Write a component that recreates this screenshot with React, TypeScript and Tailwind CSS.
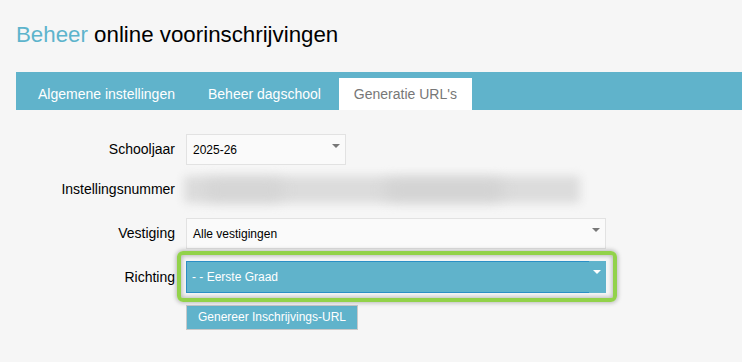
const font = { fontFamily: "'Liberation Sans', Arial, sans-serif" };

function Arrow({ light }: { light?: boolean }) {
  return (
    <span
      className={`absolute right-[5px] top-[9px] h-0 w-0 border-x-[4px] border-t-[4px] border-x-transparent ${
        light ? "border-t-white" : "border-t-[#777]"
      }`}
    />
  );
}

function Row({ label, children }: { label: string; children: React.ReactNode }) {
  return (
    <div className="flex items-center">
      <div className="w-[175px] shrink-0 text-right text-[14px] text-black">{label}</div>
      <div className="ml-[11px]">{children}</div>
    </div>
  );
}

export default function App() {
  return (
    <div className="min-h-screen w-[742px] bg-[#f6f6f6] text-black" style={font}>
      <h1 className="pl-[16px] pt-[22px] text-[22.3px] leading-[26px]">
        <span className="text-[#5db4cc]">Beheer</span> online voorinschrijvingen
      </h1>

      <nav className="ml-[16px] mt-[24px] flex h-[38px] items-end bg-[#60b3cb] pl-[22px] text-[14px]">
        <div className="flex h-[32px] items-center pr-[33px] text-white">Algemene instellingen</div>
        <div className="flex h-[32px] items-center pr-[18px] text-white">Beheer dagschool</div>
        <div className="flex h-[32px] w-[133px] items-center justify-center bg-white text-[#777]">
          Generatie URL's
        </div>
      </nav>

      <div className="mt-[24px] flex flex-col">
        <Row label="Schooljaar">
          <div className="relative flex h-[31px] w-[160px] items-center border border-[#e2e2e2] bg-[#fafafa] pl-[6px] text-[12px]">
            2025-26
            <Arrow />
          </div>
        </Row>

        <div className="mt-[11px]">
          <Row label="Instellingsnummer">
            <div className="relative -ml-[2px] h-[27px] w-[396px]">
              <div className="absolute inset-0 rounded-[2px] bg-[#dcdcdc] blur-[5px]" />
              <div className="absolute left-[20px] top-[5px] h-[18px] w-[80px] rounded-full bg-[#d4d4d4] blur-[7px]" />
              <div className="absolute left-[200px] top-[5px] h-[18px] w-[120px] rounded-full bg-[#d2d2d2] blur-[7px]" />
            </div>
          </Row>
        </div>

        <div className="mt-[15px]">
          <Row label="Vestiging">
            <div className="relative flex h-[31px] w-[420px] items-center border border-[#e2e2e2] bg-[#fafafa] pl-[6px] text-[12px]">
              Alle vestigingen
              <Arrow />
            </div>
          </Row>
        </div>

        <div className="mt-[12px]">
          <Row label="Richting">
            <div className="relative">
              <div className="pointer-events-none absolute -left-[9px] -top-[10px] h-[51px] w-[440px] rounded-[6px] border-[4px] border-[#92d24a] shadow-[0_0_4px_1px_rgba(0,0,0,0.25),inset_0_0_4px_1px_rgba(0,0,0,0.25)]" />
              <div className="relative flex h-[32px] w-[420px] items-center bg-[#60b3cb] pl-[6px] text-[12px] text-white">
                <div className="absolute inset-y-0 left-0 right-[17px] border-y border-l border-[#2b8fc5]" />
                <span className="relative">- - Eerste Graad</span>
                <Arrow light />
              </div>
            </div>
          </Row>
        </div>

        <div className="ml-[186px] mt-[11px]">
          <button className="h-[25px] w-[172px] border border-[#c9c9c9] bg-[#60b3cb] text-[12px] text-white">
            Genereer Inschrijvings-URL
          </button>
        </div>
      </div>
    </div>
  );
}
